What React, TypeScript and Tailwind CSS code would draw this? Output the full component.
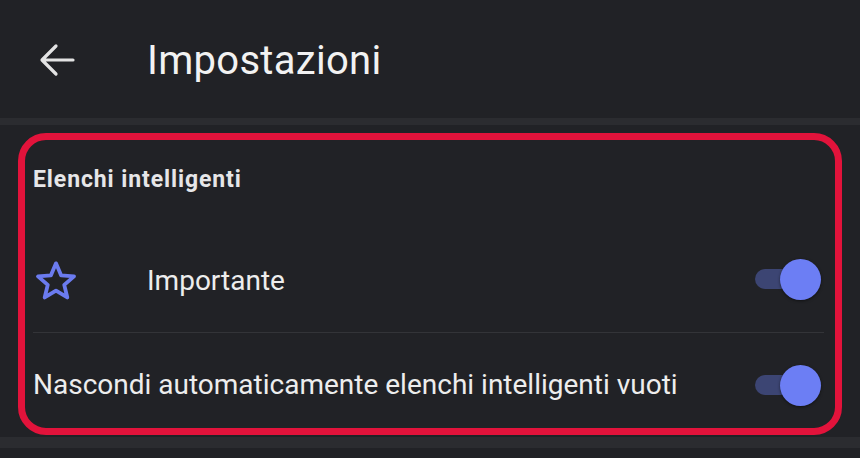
import React from 'react';

function Toggle() {
  return (
    <div className="relative w-[66px] h-[42px] flex items-center">
      <div className="w-[46px] h-[20px] rounded-full bg-[#3c4573]" />
      <div className="absolute right-0 top-[1px] w-[41px] h-[41px] rounded-full bg-[#6c7ef4] shadow-[0_1px_3px_rgba(0,0,0,0.5)]" />
    </div>
  );
}

function StarIcon() {
  return (
    <svg width="48" height="46" viewBox="0 0 24 24" fill="none">
      <polygon
        points="12,2.8 14.7,9.1 21.4,9.6 16.3,14 17.9,20.6 12,17 6.1,20.6 7.7,14 2.6,9.6 9.3,9.1"
        stroke="#6b7bef"
        strokeWidth="2"
        strokeLinejoin="round"
      />
    </svg>
  );
}

export default function App() {
  return (
    <div className="w-[860px] h-[458px] bg-[#212226] overflow-hidden" style={{ fontFamily: 'Roboto, "Noto Sans", sans-serif' }}>
      {/* Top bar */}
      <div className="h-[118px] flex items-center">
        <div className="w-[147px] pl-[39px] pt-[2px]">
          <svg width="36" height="34" viewBox="0 0 36 34" fill="none">
            <path d="M34 17H4M17 3L3 17l14 14" stroke="#e3e3e3" strokeWidth="3.2" strokeLinecap="round" strokeLinejoin="round" />
          </svg>
        </div>
        <h1 className="text-[40px] text-[#f2f2f2] leading-none pt-[3px] tracking-[0.3px]">Impostazioni</h1>
      </div>
      <div className="h-[7px] bg-[#2b2c30]" />

      {/* Section */}
      <div className="h-[312px] pt-[8px] px-[18px]">
        <div className="h-[302px] border-[7px] border-[#e2133b] rounded-[28px] px-[8px]">
          <div className="h-[80px] flex items-center">
            <h2 className="text-[23px] font-bold tracking-[0.9px] text-[#e6e6e8]">Elenchi intelligenti</h2>
          </div>
          <div className="h-[112px] pt-[10px] flex items-center justify-between">
            <div className="flex items-center">
              <div className="w-[114px] -ml-[1px] mr-[1px]">
                <StarIcon />
              </div>
              <span className="text-[28px] text-[#ededed]">Importante</span>
            </div>
            <div className="pr-[6px] -mt-[4px]">
              <Toggle />
            </div>
          </div>
          <div className="h-px bg-[#333438] mr-[3px]" />
          <div className="h-[95px] pt-[8px] flex items-center justify-between">
            <span className="text-[28px] text-[#ededed]">Nascondi automaticamente elenchi intelligenti vuoti</span>
            <div className="pr-[6px]">
              <Toggle />
            </div>
          </div>
        </div>
      </div>
      <div className="h-[11px] bg-[#2b2c30]" />
    </div>
  );
}
